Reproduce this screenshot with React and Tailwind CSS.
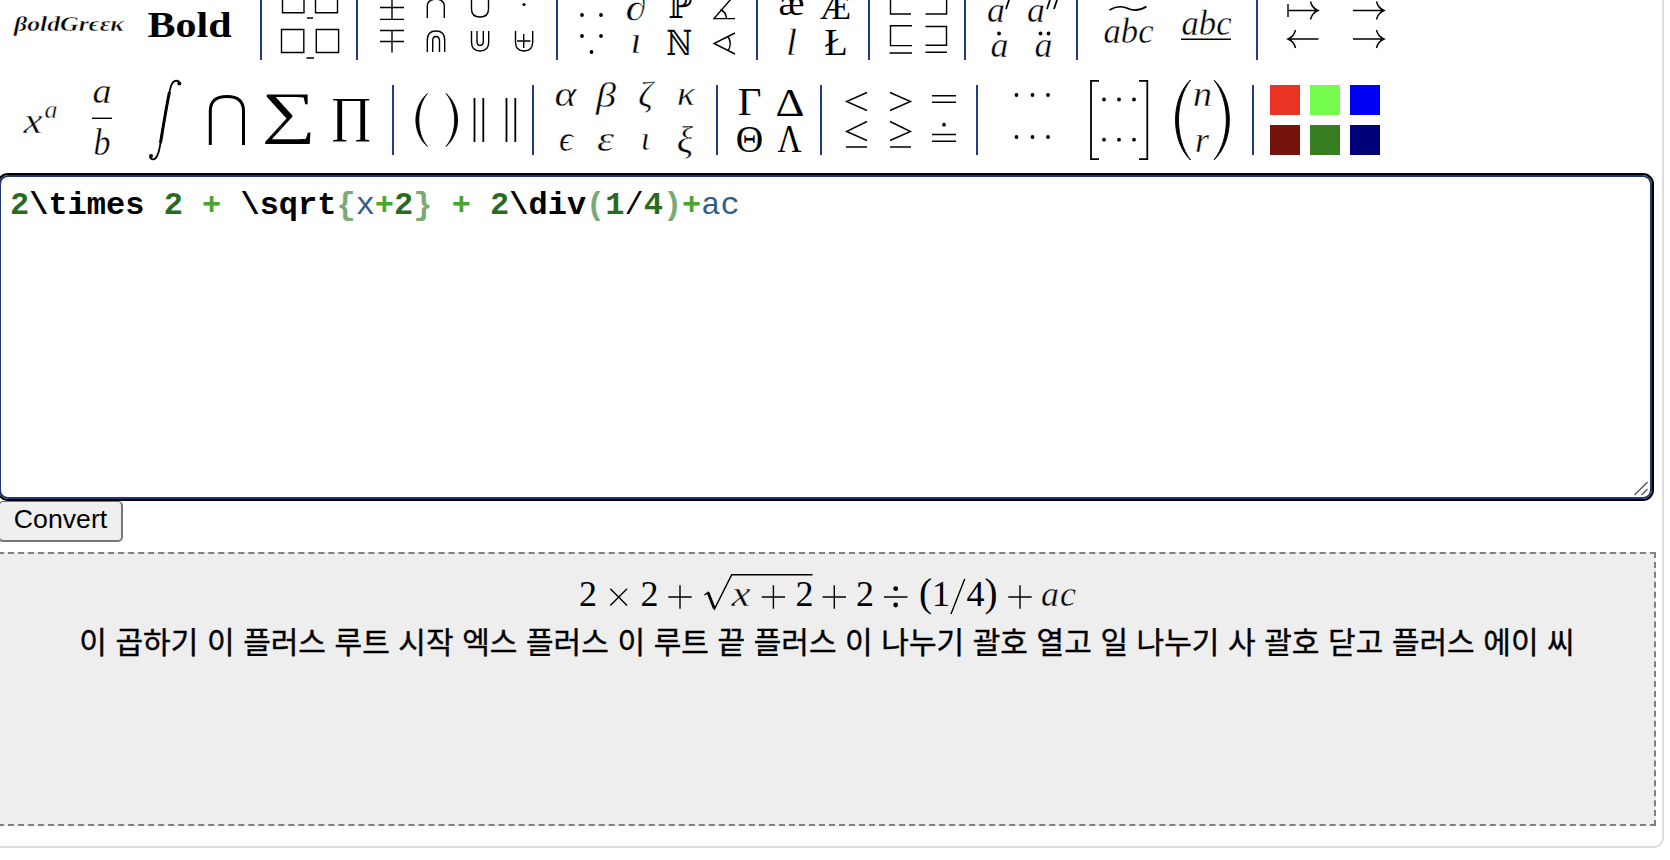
import React from "react";

const SERIF = "font-['Liberation_Serif','DejaVu_Serif',serif]";

/* Toolbar artwork shares one coordinate plane; each piece shows its own slice of it. */
function Art({ x, y, w, h, children }) {
  return (
    <svg
      width={w}
      height={h}
      viewBox={`${x} ${y} ${w} ${h}`}
      className={`block shrink-0 overflow-visible ${SERIF}`}
      fill="none"
      stroke="black"
      strokeWidth="1.4"
    >
      {children}
    </svg>
  );
}

/* Glyph centred on x with its baseline at y; w stretches it to a given advance. */
function T({ x, y, s = 36, w, it, b, bg = "white", children }) {
  const fit = w ? { textLength: w, lengthAdjust: "spacingAndGlyphs" } : {};
  return (
    <text
      x={w ? x - w / 2 : x}
      y={y}
      fontSize={s}
      fontStyle={it ? "italic" : "normal"}
      fontWeight={b ? 700 : 400}
      textAnchor={w ? "start" : "middle"}
      fill="black"
      stroke={it ? bg : "none"}
      strokeWidth="0.4"
      {...fit}
    >
      {children}
    </text>
  );
}

function Dots({ at, r = 1.9 }) {
  return at.map(([x, y]) => <circle key={`${x}-${y}`} cx={x} cy={y} r={r} fill="black" stroke="none" />);
}

function Section({ width, children }) {
  const cls = {
    262: "w-[262px]", 96: "w-[96px]", 200: "w-[200px]", 112: "w-[112px]", 180: "w-[180px]",
    394: "w-[394px]", 140: "w-[140px]", 184: "w-[184px]", 104: "w-[104px]", 156: "w-[156px]", 276: "w-[276px]",
  }[width];
  return <div className={`${cls} shrink-0 border-r-2 border-[#1f3d8a]`}>{children}</div>;
}

function TopRow() {
  return (
    <div className="flex h-[60px]">
      <Section width={262}>
        <Art x={0} y={0} w={260} h={60}>
          <T x={69} y={30.5} s={21} w={110} it b>βoldGrϵεκ</T>
          <T x={189.5} y={37} s={36.5} w={84} b>Bold</T>
        </Art>
      </Section>
      <Section width={96}>
        <Art x={262} y={0} w={94} h={60}>
          <path d="M282.5 0V12.7H304V0M315.5 0V12.7H337.5V0M281.5 29.5h22.3v23h-22.3zM316.3 29.5h22.3v23h-22.3zM307 18h6M306.5 58h7.5" />
        </Art>
      </Section>
      <Section width={200}>
        <Art x={358} y={0} w={198} h={60}>
          <path d="M380 7.5h24M380 19.4h24M392 0V19.4M380 30.5h24M380 41.5h24M392 30.5V52.5" />
          <path d="M427.3 18V6Q427.3 0 436 -1Q444.3 0 444.3 6V18M471.5 0V9Q471.5 17 480 17Q488.5 17 488.5 9V0" />
          <path d="M427.3 52V40Q427.3 31 436 31Q444.7 31 444.7 40V52M432.7 52V41Q432.7 36.5 436 36.5Q439.5 36.5 439.5 41V52" />
          <path d="M471.5 31V42Q471.5 51 480 51Q488.7 51 488.7 42V31M477 31V41Q477 45.5 480 45.5Q483.3 45.5 483.3 41V31" />
          <path d="M515.5 31V42Q515.5 51 524 51Q532.7 51 532.7 42V31M523.7 34V48M517 41h13.5" />
          <Dots at={[[524, 4.5]]} r={1.6} />
        </Art>
      </Section>
      <Section width={200}>
        <Art x={558} y={0} w={198} h={60}>
          <Dots at={[[582, 15], [601, 15], [582, 36], [601, 36], [591.5, 52]]} />
          <T x={636} y={20} s={38} w={21} it>∂</T>
          <T x={636} y={53} s={38} it>ı</T>
          <T x={680} y={18} s={35} w={24}>ℙ</T>
          <T x={679.5} y={55} s={35} w={26}>ℕ</T>
          <path d="M735 18.6H714L731 -1M720.5 9.5Q726 12 726.5 18.6M735 33L714 43.5L735 54M728 36.5Q732.5 43.5 728 51" />
        </Art>
      </Section>
      <Section width={112}>
        <Art x={758} y={0} w={110} h={60}>
          <T x={791.5} y={15} w={26}>æ</T>
          <T x={835.5} y={19} w={31}>Æ</T>
          <T x={791.5} y={55} s={38} it>l</T>
          <T x={836} y={55} s={38}>Ł</T>
        </Art>
      </Section>
      <Section width={96}>
        <Art x={870} y={0} w={94} h={60}>
          <path d="M890.5 0V14H911M925.5 14H946.6V0M912 25.7H890.5V45.6H912M889.5 53h22.5M925.5 26.5H946.5V45.3H925.5M925.5 52.2H947" />
        </Art>
      </Section>
      <Section width={112}>
        <Art x={966} y={0} w={110} h={60}>
          <T x={996} y={22} it>a</T>
          <T x={1036} y={22} it>a</T>
          <path d="M1009 0L1006 9M1050 0L1047 9M1057 0L1054 9" strokeWidth="1.8" />
          <T x={999.5} y={57} it>a</T>
          <T x={1043.5} y={57} it>a</T>
          <Dots at={[[999, 33.5], [1040.5, 33.5], [1048.5, 33.5]]} />
        </Art>
      </Section>
      <Section width={180}>
        <Art x={1078} y={0} w={178} h={60}>
          <T x={1128.5} y={43} w={50} it>abc</T>
          <path d="M1109.5 10Q1119 4.5 1128 8.5T1146.5 6.5" strokeWidth="1.6" />
          <T x={1206.5} y={35} w={50} it>abc</T>
          <path d="M1181 39.2h50" strokeWidth="1.6" />
        </Art>
      </Section>
      <Art x={1258} y={0} w={140} h={60}>
        <path d="M1288 4V17M1288 10.5h29M1310.5 1.5Q1312 8 1318 10.5Q1312 13 1310.5 19.5M1353 10.5h30M1376.5 1.5Q1378 8 1384 10.5Q1378 13 1376.5 19.5M1318.5 39h-29M1295.5 30Q1294 36.5 1288 39Q1294 41.5 1295.5 48M1353 39h30M1376.5 30Q1378 36.5 1384 39Q1378 41.5 1376.5 48" />
      </Art>
    </div>
  );
}

const SWATCHES = ["bg-[#eb3323]", "bg-[#75fb4c]", "bg-[#0000f5]", "bg-[#75140c]", "bg-[#377e22]", "bg-[#00007b]"];

function MainRow() {
  return (
    <div className="mt-[25px] flex h-[70px]">
      <Section width={394}>
        <Art x={0} y={85} w={392} h={70}>
          <T x={33} y={133} w={19} it>x</T>
          <T x={51} y={118} s={26} it>a</T>
          <T x={102} y={102.5} w={19} it>a</T>
          <path d="M92 118.3h20" />
          <T x={102} y={155} s={38} w={17} it>b</T>
          <path
            d="M180 84.5C179 79.5 173.5 79 171 86C167.5 98 163.5 124 160.5 143C158.5 156 156 159.5 153 159.3C150.5 159 149.8 157.5 150.5 156.5"
            strokeWidth="1.8"
          />
          <path d="M169.5 92C167 103 163 128 160.5 143" strokeWidth="3" />
          <Dots at={[[179.3, 83.5], [151, 156]]} r={2} />
          <path d="M210.3 145V111Q210.3 96.500 227 96.500Q243.500 96.500 243.500 111V145" strokeWidth="3" />
          <T x={289} y={132} s={57} w={54}>∑</T>
          <T x={351} y={131} s={49} w={42}>∏</T>
        </Art>
      </Section>
      <Section width={140}>
        <Art x={394} y={85} w={138} h={70}>
          <path d="M427.5 93.5C412 107 412 133 427.5 146.5C416 133 416 107 427.5 93.5ZM446 93.5C461.5 107 461.5 133 446 146.5C457.5 133 457.5 107 446 93.5Z" fill="black" strokeWidth="0.8" />
          <path d="M474.5 98V142M483.3 98V142M506.5 98V142M515.3 98V142" strokeWidth="1.8" />
        </Art>
      </Section>
      <Section width={184}>
        <Art x={534} y={85} w={182} h={70}>
          <T x={565.5} y={105.5} s={35} w={22} it>α</T>
          <T x={606} y={106.5} s={36} w={20} it>β</T>
          <T x={645.5} y={106.5} s={36} it>ζ</T>
          <T x={686} y={104.5} s={33} w={18} it>κ</T>
          <T x={566} y={151} s={35} it>ϵ</T>
          <T x={605.5} y={151} s={35} w={17} it>ε</T>
          <T x={645.5} y={149.5} s={34} it>ι</T>
          <T x={685} y={152.5} s={38} it>ξ</T>
        </Art>
      </Section>
      <Section width={104}>
        <Art x={718} y={85} w={102} h={70}>
          <T x={749.5} y={115} s={41}>Γ</T>
          <T x={790} y={115.5} s={41} w={29}>Δ</T>
          <T x={749.5} y={152} s={38}>Θ</T>
          <T x={789.5} y={152} s={39} w={24}>Λ</T>
        </Art>
      </Section>
      <Section width={156}>
        <Art x={822} y={85} w={154} h={70}>
          <path d="M867 92.5L846.5 101.5L867 110.5M890 92.5L910.5 101.5L890 110.5M932 95.7h24M932 102.3h24" />
          <path d="M867 121.5L846.5 131.5L867 140.5M890 121.5L910.5 131.5L890 140.5M846 147h21M890 147h21M932 134.5h24M932 141.3h24" />
          <Dots at={[[944, 124.7]]} />
        </Art>
      </Section>
      <Section width={276}>
        <Art x={978} y={85} w={274} h={70}>
          <Dots at={[[1016.5, 95], [1032.5, 95], [1048, 95], [1016.5, 137], [1032.5, 137], [1048, 137]]} />
          <Dots at={[[1104, 99.5], [1119, 99.5], [1134, 99.5], [1104, 139.7], [1119, 139.7], [1134, 139.7]]} />
          <path d="M1099 80.8H1091V159.2H1099M1139 80.8H1147.3V159.2H1139" strokeWidth="1.8" />
          <path d="M1190.5 80C1170.5 99 1170.5 141 1190.5 160C1174.5 139 1174.5 101 1190.5 80ZM1214 80C1234.5 99 1234.5 141 1214 160C1230.5 139 1230.5 101 1214 80Z" fill="black" strokeWidth="0.9" />
          <T x={1202.5} y={106} s={35} w={19} it>n</T>
          <T x={1202} y={152} s={35} w={14} it>r</T>
        </Art>
      </Section>
      <div className="ml-4 grid grid-cols-[30px_30px_30px] grid-rows-[30px_30px] gap-2.5">
        {SWATCHES.map((c) => (
          <div key={c} className={c} />
        ))}
      </div>
    </div>
  );
}

const NUM = "font-bold text-[#2a6a1e]";
const OP = "font-bold text-[#4aa52e]";
const CMD = "font-bold text-black";
const BR = "font-bold text-[#7aaa74]";
const ID = "text-[#2f6088]";

const TOKENS = [
  ["2", NUM], ["\\times", CMD], [" ", CMD], ["2", NUM], [" ", CMD], ["+", OP], [" ", CMD], ["\\sqrt", CMD], ["{", BR],
  ["x", ID], ["+", OP], ["2", NUM], ["}", BR], [" ", CMD], ["+", OP], [" ", CMD], ["2", NUM], ["\\div", CMD],
  ["(", BR], ["1", NUM], ["/", "text-black"], ["4", NUM], [")", BR], ["+", OP], ["ac", ID],
];

function Editor() {
  return (
    <div className="relative mt-[18px] ml-[-3px] h-[328px] w-[1657px] rounded-[11px] border-2 border-black bg-white">
      <div className="h-full rounded-[9px] border-2 border-[#1f3872] pt-[9px] pl-[9px]">
        <pre className="font-['Liberation_Mono',monospace] text-[32px] leading-[40px]">
          {TOKENS.map(([t, c], i) => (
            <span key={i} className={c}>{t}</span>
          ))}
        </pre>
      </div>
      <svg className="absolute right-[3px] bottom-[3px]" width="15" height="15" viewBox="0 0 15 15" stroke="#555" strokeWidth="1.4">
        <path d="M0.5 14L13.5 1M7.5 14L13.5 8" />
      </svg>
    </div>
  );
}

function Formula() {
  const bg = "#eeeeee";
  return (
    <Art x={577} y={570} w={500} h={50}>
      <T x={588} y={606} s={36}>2</T>
      <path d="M610.3 588.7l16.800 16.800M627.100 588.700l-16.800 16.800" />
      <T x={649.5} y={606} s={36}>2</T>
      <path d="M668.3 597h23.400M680 585.300v23.400M761.700 597h23.400M773.400 585.300v23.400M822.600 597h23.400M834.300 585.300v23.400M884 597h23.500M1008.300 597h23.400M1020 585.300v23.400" />
      <Dots at={[[895.7, 588.7], [895.7, 605]]} r={2.400} />
      <path d="M704.500 595L708 592.500L714.500 609L731.700 574.700H812.500" strokeWidth="1.500" />
      <path d="M708 592.500L714.300 608.500" strokeWidth="2.800" />
      <T x={741} y={606} w={19} it bg={bg}>x</T>
      <T x={804.500} y={606} s={36}>2</T>
      <T x={865} y={606} s={36}>2</T>
      <T x={925.500} y={606} s={39}>(</T>
      <T x={941} y={606} s={36}>1</T>
      <path d="M964.700 579L951 614" />
      <T x={975.500} y={606} s={36}>4</T>
      <T x={991} y={606} s={39}>)</T>
      <T x={1050} y={606} it bg={bg}>a</T>
      <T x={1068} y={606} it bg={bg}>c</T>
    </Art>
  );
}

export default function App() {
  return (
    <div className="h-[860px] w-[1670px] overflow-hidden bg-white">
      <div className="h-[848px] w-[1664px] rounded-br-[10px] border-r-2 border-b-2 border-[#dcdcdc]">
        <TopRow />
        <MainRow />
        <Editor />
        <button className="ml-[-2px] block h-[41px] w-[125px] rounded-[5px] border-2 border-t-[1px] border-[#767676] bg-[#efefef] pb-1 text-center font-['Liberation_Sans',sans-serif] text-[26.67px] leading-8 text-black">
          Convert
        </button>
        <div className="mt-[10px] ml-[-2px] flex h-[274px] w-[1658px] flex-col items-center border-2 border-dashed border-[#808080] bg-[#eeeeee] pt-4">
          <Formula />
          <p className="mt-0.5 font-['Noto_Sans_CJK_KR',sans-serif] text-[30px] leading-9 whitespace-nowrap text-black [-webkit-text-stroke:0.4px_black] [word-spacing:1.9px]">
            이 곱하기 이 플러스 루트 시작 엑스 플러스 이 루트 끝 플러스 이 나누기 괄호 열고 일 나누기 사 괄호 닫고 플러스 에이 씨
          </p>
        </div>
      </div>
    </div>
  );
}
